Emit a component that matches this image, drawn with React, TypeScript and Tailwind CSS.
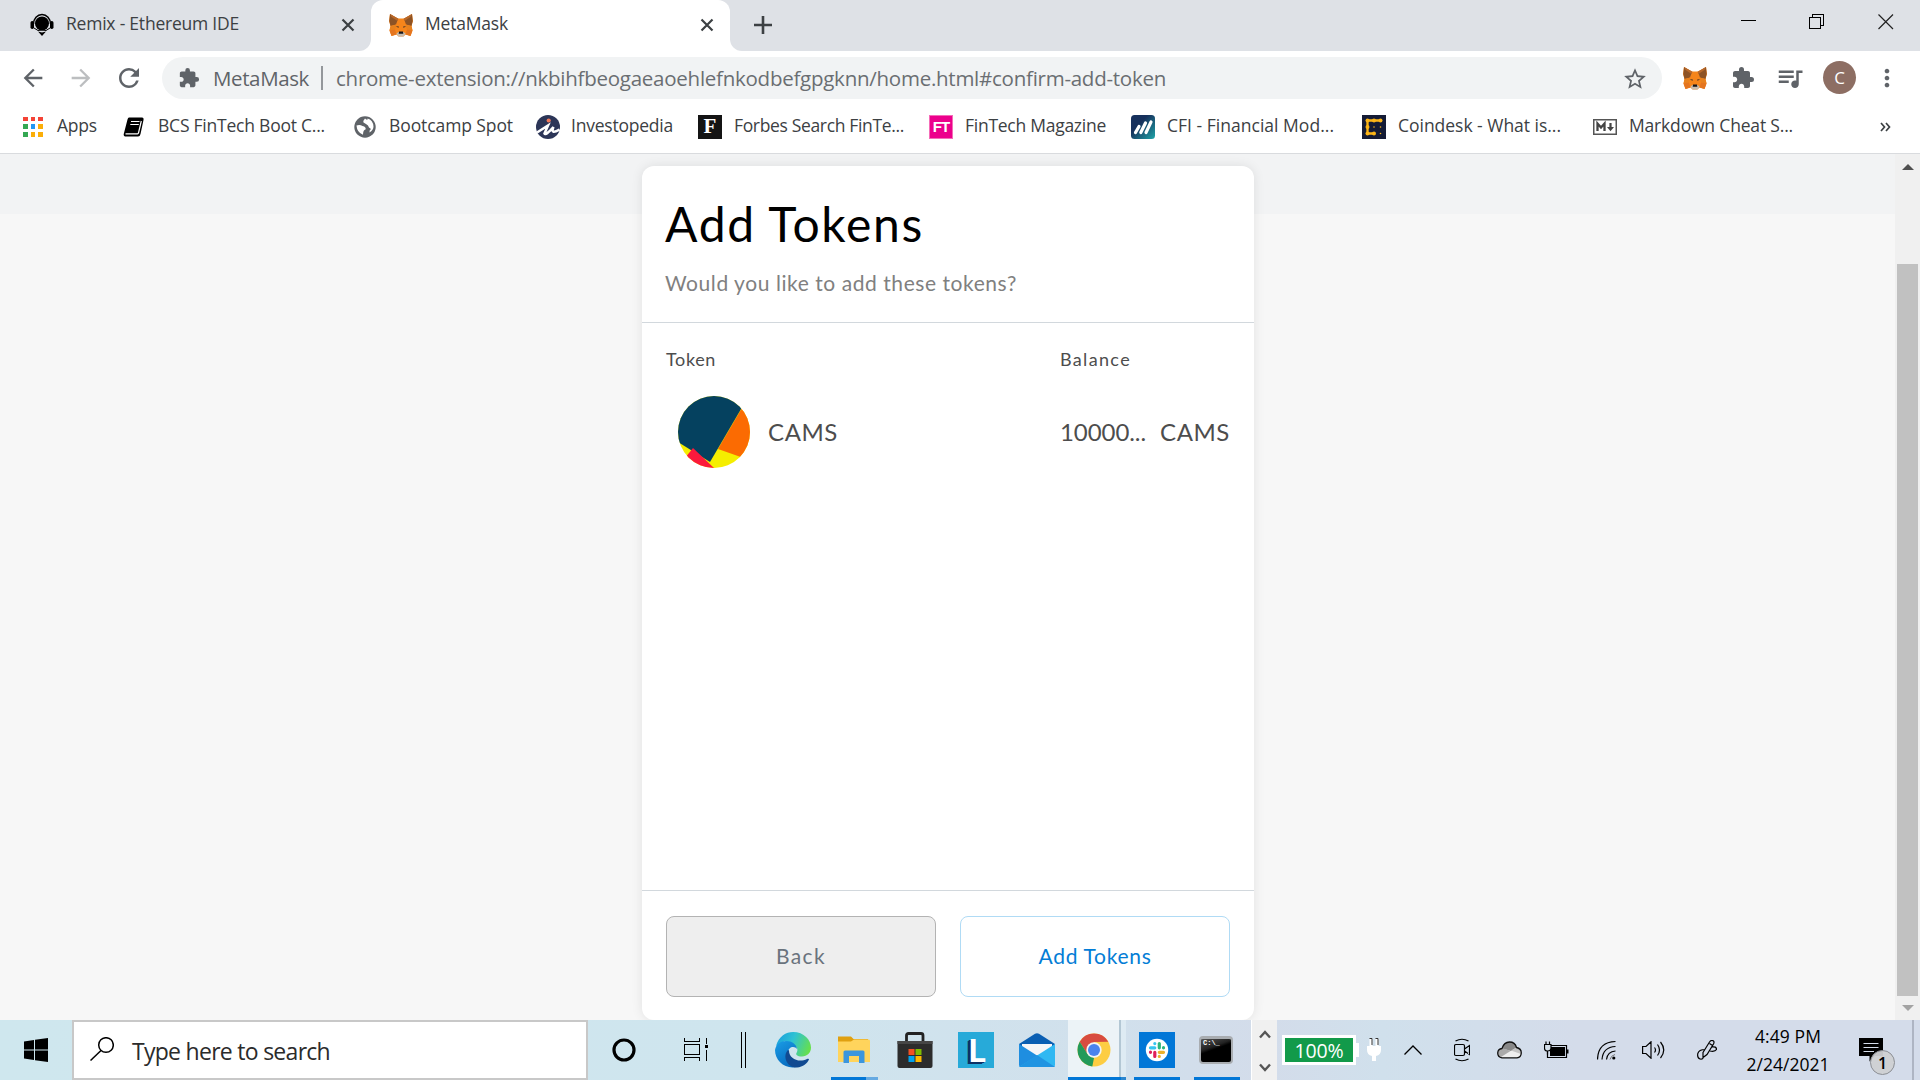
import React, { useLayoutEffect, useRef } from "react";
import { MdArrowBack, MdArrowForward, MdRefresh, MdExtension, MdStarBorder, MdQueueMusic, MdMoreVert } from "react-icons/md";

/* Text spread over a fixed width by adjusting its tracking. */
function Fit({ w, className = "", children }: { w: number; className?: string; children: string }) {
  const ref = useRef<HTMLSpanElement>(null);
  useLayoutEffect(() => {
    const el = ref.current;
    if (!el) return;
    const apply = () => {
      el.style.letterSpacing = "0px";
      const natural = el.getBoundingClientRect().width;
      el.style.letterSpacing = (w - natural) / children.length + "px";
    };
    apply();
    document.fonts?.ready.then(apply);
  }, [w, children]);
  return (
    <span className={"block shrink-0 leading-none whitespace-nowrap " + className} style={{ width: w }}>
      <span ref={ref} className="inline-block">{children}</span>
    </span>
  );
}

function Fox() {
  return (
    <svg viewBox="0 0 24 24" className="h-6 w-6 shrink-0">
      <path d="M1 1 L9 5.5 H15 L23 1 L24 8 L22.5 13 L23.500 17.5 L21.500 23 L16.5 21.5 L14.5 23.5 H9.5 L7.5 21.5 L2.500 23 L0.500 17.5 L1.5 13 L0 8 Z" fill="#f6851b" />
      <path d="M1 1 L9 6 L7 11.500 L1.500 13 L0.300 8 Z M23 1 L15 6 L17 11.500 L22.500 13 L23.700 8 Z" fill="#8d5325" />
      <path d="M1 1 L9.500 5.800 L8.500 8 L2.500 4 Z M23 1 L14.500 5.800 L15.500 8 L21.500 4 Z" fill="#b8682a" />
      <path d="M1.500 13 L7.500 11.500 L6 16.500 L0.500 17.500 Z M22.500 13 L16.500 11.500 L18 16.500 L23.500 17.500 Z" fill="#e8821e" />
      <path d="M6 16.500 L7.500 21.500 L2.500 23 L0.500 17.500 Z M18 16.500 L16.500 21.500 L21.500 23 L23.500 17.500 Z" fill="#e4751f" />
      <path d="M6.800 13.500 L9.500 13 L9.800 15 Z M17.200 13.500 L14.500 13 L14.200 15 Z" fill="#6b4526" />
      <path d="M7.500 20.500 L9.500 19 H14.500 L16.500 20.500 L14.500 23.500 H9.500 Z" fill="#c7bcb0" />
      <path d="M10 18.500 H14 L14.300 20.800 H9.700 Z" fill="#16161a" />
    </svg>
  );
}

function CloseX({ className }: { className: string }) {
  return (
    <svg viewBox="0 0 14 14" className={"h-3.5 w-3.5 shrink-0 " + className}>
      <path d="M1.500 1.500 L12.500 12.500 M12.500 1.500 L1.500 12.500" stroke="#3c4043" strokeWidth="2.200" fill="none" />
    </svg>
  );
}

function TabStrip() {
  return (
    <div className="flex h-[51px] bg-[#dee1e6]">
      <div className="flex h-[51px] w-[371px] shrink-0 items-center bg-white">
        <div className="flex h-full w-full items-center rounded-br-xl bg-[#dee1e6] pb-px pl-[30px]">
          <svg viewBox="0 0 24 24" className="mb-0.5 h-6 w-6 shrink-0">
            <path d="M3.500 12 A8.500 9.500 0 0 1 20.500 12" fill="none" stroke="#000" strokeWidth="1.500" />
            <circle cx="12" cy="11.500" r="7" fill="#000" />
            <rect x="0.500" y="9" width="3.500" height="8" rx="1.700" />
            <rect x="20" y="9" width="3.500" height="8" rx="1.700" />
            <path d="M4 16 Q8 20 12 18 Q16 20 20 16" stroke="#000" fill="none" />
            <path d="M8 19.500 L12 24 L16 19.500 L12 20.500 Z" />
          </svg>
          <Fit w={173} className="mb-0.5 ml-3 text-[17.500px] text-[#3c4043]">Remix - Ethereum IDE</Fit>
          <CloseX className="ml-[102px]" />
        </div>
      </div>
      <div className="flex h-[51px] w-[359px] shrink-0 items-center rounded-t-xl bg-white pb-px pl-[18px]">
        <Fox />
        <Fit w={83} className="mb-0.5 ml-3 text-[17.500px] text-[#3c4043]">MetaMask</Fit>
        <CloseX className="ml-[192px]" />
      </div>
      <div className="h-[51px] flex-1 bg-white">
        <div className="flex h-full rounded-bl-xl bg-[#dee1e6] pl-[23px]">
          <svg viewBox="0 0 20 20" className="mt-[15px] h-5 w-5">
            <path d="M10 1 V19 M1 10 H19" stroke="#3c4043" strokeWidth="2.600" />
          </svg>
          <div className="mt-3.5 mr-[26px] ml-auto flex gap-[53px]">
            <svg viewBox="0 0 16 16" className="-mr-px h-4 w-4" shapeRendering="crispEdges"><path d="M0 6.500 H15" stroke="#000" /></svg>
            <svg viewBox="0 0 16 16" className="h-4 w-4" shapeRendering="crispEdges">
              <path d="M0.500 3.500 H11.500 V14.500 H0.500 Z M3.500 3.500 V0.500 H14.500 V11.500 H11.500" fill="none" stroke="#000" />
            </svg>
            <svg viewBox="0 0 16 16" className="h-4 w-4"><path d="M0.500 0.500 L15 15 M15 0.500 L0.500 15" stroke="#222" strokeWidth="1.200" /></svg>
          </div>
        </div>
      </div>
    </div>
  );
}

function Toolbar() {
  return (
    <div className="flex h-[53px] items-center bg-white pl-[19px]">
      <MdArrowBack className="h-7 w-7 text-[#5f6368]" />
      <MdArrowForward className="ml-5 h-7 w-7 text-[#bcbec0]" />
      <MdRefresh className="ml-[19px] h-[30px] w-[30px] text-[#5f6368]" />
      <div className="ml-[18px] flex h-[42px] w-[1500px] items-center rounded-full bg-[#f1f3f4] pr-3.5">
        <MdExtension className="ml-4 h-[22px] w-[22px] text-[#5f6368]" />
        <Fit w={96} className="mt-0.5 ml-[13px] text-[20.500px] text-[#5f6368]">MetaMask</Fit>
        <div className="ml-3 h-6 w-0.5 bg-[#94979b]" />
        <Fit w={830} className="mt-0.5 ml-[13px] text-[20.500px] text-[#6a6e72]">chrome-extension://nkbihfbeogaeaoehlefnkodbefgpgknn/home.html#confirm-add-token</Fit>
        <MdStarBorder className="mt-0.5 ml-auto h-[26px] w-[26px] text-[#5f6368]" />
      </div>
      <div className="ml-[21px]"><Fox /></div>
      <MdExtension className="ml-6 h-6 w-6 text-[#5f6368]" />
      <MdQueueMusic className="ml-5 h-[30px] w-[30px] text-[#5f6368]" />
      <div className="ml-[18px] flex h-[33px] w-[33px] items-center justify-center rounded-full bg-[#8d6e63] text-[17px] leading-none text-white">C</div>
      <MdMoreVert className="ml-[17px] h-7 w-7 text-[#5f6368]" />
    </div>
  );
}

const bookmarks: { icon: React.ReactNode; lead: string; gap: string; w: number; label: string }[] = [
  {
    lead: "ml-[23px]", gap: "ml-3.5", w: 40, label: "Apps",
    icon: (
      <div className="grid h-5 w-5 shrink-0 grid-cols-3 gap-[3px]">
        <i className="bg-[#f44336]" /><i className="bg-[#f44336]" /><i className="bg-[#f44336]" />
        <i className="bg-[#34a853]" /><i className="bg-[#2196f3]" /><i className="bg-[#fbae08]" />
        <i className="bg-[#34a853]" /><i className="bg-[#fbae08]" /><i className="bg-[#fbae08]" />
      </div>
    ),
  },
  {
    lead: "ml-[26px]", gap: "ml-[13px]", w: 167, label: "BCS FinTech Boot C...",
    icon: (
      <svg viewBox="0 0 22 20" className="h-5 w-[22px] shrink-0">
        <path d="M6 0.500 H19 Q21 0.500 20.500 3 L17.500 17 Q17 19.500 15 19.500 H2 Q0 18.500 1 16 L4.500 2.500 Q5 0.500 6 0.500 Z" fill="#000" />
        <path d="M8 4.500 H16.500 M7.300 7.500 H15.800" stroke="#fff" strokeWidth="1.200" />
        <path d="M2.500 16.800 H14.500 Q15.300 16.800 15.600 15.500 L18.300 4" stroke="#fff" strokeWidth="1.200" fill="none" />
      </svg>
    ),
  },
  {
    lead: "ml-[29px]", gap: "ml-[13px]", w: 124, label: "Bootcamp Spot",
    icon: (
      <svg viewBox="0 0 22 22" className="h-[22px] w-[22px] shrink-0">
        <circle cx="11" cy="11" r="10.700" fill="#5f6368" />
        <path d="M2.500 9.500 Q6 8.500 8.500 10 Q12.500 11 11.500 13.500 Q9 14 9 18.800 Q3 16.500 2.500 9.500 Z M11 2.500 Q9 4.500 9.500 6.500 L12 8 Q14.500 9 15 11.500 L17 13 Q15 14 15.500 16.500 Q19.500 14 19.500 10.500 Q19 4 13.500 2.500 Q14 5 11 2.500 Z" fill="#fff" />
      </svg>
    ),
  },
  {
    lead: "ml-[23px]", gap: "ml-[11px]", w: 102, label: "Investopedia",
    icon: (
      <svg viewBox="0 0 24 24" className="h-6 w-6 shrink-0">
        <circle cx="12" cy="12" r="12" fill="#2c3557" />
        <circle cx="12.700" cy="5.500" r="2.100" fill="#f0795b" />
        <path d="M1 17.500 L12 10.500 L8.500 18.500 Q9.500 21 17.500 12 Q14 20 23.500 14.500" fill="none" stroke="#fff" strokeWidth="2.500" />
      </svg>
    ),
  },
  {
    lead: "ml-[25px]", gap: "ml-3", w: 170, label: "Forbes Search FinTe...",
    icon: <div className="flex h-6 w-6 shrink-0 items-center justify-center bg-[#141414] font-['Liberation_Serif',serif] text-[21px] leading-none font-bold text-white">F</div>,
  },
  {
    lead: "ml-[25px]", gap: "ml-3", w: 141, label: "FinTech Magazine",
    icon: <div className="flex h-6 w-6 shrink-0 items-center justify-center border border-[#f56cb8] bg-[#ec008c] font-['Liberation_Sans',sans-serif] text-[15px] leading-none font-bold tracking-[-1px] text-white">FT</div>,
  },
  {
    lead: "ml-[25px]", gap: "ml-3", w: 167, label: "CFI - Financial Mod...",
    icon: (
      <svg viewBox="0 0 24 24" className="h-6 w-6 shrink-0">
        <defs><linearGradient id="cfi" x1="0" y1="0" x2="1" y2="1"><stop offset="0.350" stopColor="#16305c" /><stop offset="1" stopColor="#1fa5a8" /></linearGradient></defs>
        <rect width="24" height="24" rx="3.500" fill="url(#cfi)" />
        <path d="M4.500 17.500 L8 11.500 M9.800 17.500 L14.500 8 M15 17.500 L20 7" stroke="#fff" strokeWidth="3.200" strokeLinecap="round" />
      </svg>
    ),
  },
  {
    lead: "ml-[28px]", gap: "ml-3", w: 163, label: "Coindesk - What is...",
    icon: (
      <svg viewBox="0 0 24 24" className="h-6 w-6 shrink-0">
        <rect width="24" height="24" fill="#141b35" />
        <path d="M18.500 5.500 H5.500 V18.500 H12" fill="none" stroke="#fcb517" strokeWidth="2.300" />
        <g fill="#fcb517"><circle cx="5.500" cy="5.500" r="2" /><circle cx="12" cy="5.500" r="2" /><circle cx="18.500" cy="5.500" r="2" /><circle cx="5.500" cy="12" r="2" /><circle cx="5.500" cy="18.500" r="2" /><circle cx="12" cy="18.500" r="2" /><circle cx="12" cy="12" r="0.800" /><circle cx="18.500" cy="12" r="0.800" /><circle cx="18.500" cy="18.500" r="0.800" /></g>
      </svg>
    ),
  },
  {
    lead: "ml-[32px]", gap: "ml-3", w: 164, label: "Markdown Cheat S...",
    icon: (
      <svg viewBox="0 0 24 16" className="h-4 w-6 shrink-0">
        <rect x="0.750" y="0.750" width="22.500" height="14.500" fill="#fff" stroke="#555" strokeWidth="1.500" />
        <path d="M4.500 12 V4.500 L8 8.500 L11.500 4.500 V12" fill="none" stroke="#444" strokeWidth="2.300" />
        <path d="M17.500 4 V9" stroke="#444" strokeWidth="2.200" /><path d="M14 8 H21 L17.500 12.300 Z" fill="#444" />
      </svg>
    ),
  },
];

function Bookmarks() {
  return (
    <div className="flex h-[50px] items-center border-b border-[#d9dbde] bg-white pb-1">
      {bookmarks.map((b) => (
        <div key={b.label} className={"flex shrink-0 items-center " + b.lead}>
          {b.icon}
          <Fit w={b.w} className={"mb-0.5 text-[17.500px] text-[#3c4043] " + b.gap}>{b.label}</Fit>
        </div>
      ))}
      <svg viewBox="0 0 11 10" className="mr-[29px] ml-auto h-2.5 w-[11px]">
        <path d="M1 1 L4.500 5 L1 9 M6 1 L9.500 5 L6 9" fill="none" stroke="#3c4043" strokeWidth="1.700" />
      </svg>
    </div>
  );
}

function Page() {
  return (
    <div className="flex h-[866px] overflow-hidden bg-[#f7f7f7] font-[Lato,sans-serif]">
      <div className="flex flex-1 justify-center bg-[linear-gradient(#f2f3f4_0,#f2f3f4_60px,#f7f7f7_60px)] pl-px">
        <div className="mt-3 flex h-[854px] w-[612px] flex-col rounded-xl bg-white shadow-[0_0_12px_rgba(0,0,0,0.09)]">
          <div className="h-[157px] border-b border-[#d2d8dd] px-[23px] pt-[34px]">
            <Fit w={259} className="text-[48px] text-black">Add Tokens</Fit>
            <Fit w={352} className="mt-[24px] text-[21px] text-[#808080]">Would you like to add these tokens?</Fit>
          </div>
          <div className="flex flex-1 flex-col px-6 pt-[27px] text-[#4d4d4d]">
            <div className="flex">
              <Fit w={50} className="text-[18px]">Token</Fit>
              <Fit w={71} className="ml-[344px] text-[18px]">Balance</Fit>
            </div>
            <div className="mt-[28px] flex items-center pl-3">
              <svg viewBox="0 0 72 72" className="h-[72px] w-[72px]">
                <defs><clipPath id="disc"><circle cx="36" cy="36" r="36" /></clipPath></defs>
                <g clipPath="url(#disc)">
                  <rect width="72" height="72" fill="#f5ee00" />
                  <path d="M64 12 L80 12 L80 67 L40 53 Z" fill="#fb6b02" />
                  <path d="M-4 -4 H73 L32 66 L0 46 Z" fill="#05415f" />
                  <path d="M15 52 L36 72 L5 74 L7 62 Z" fill="#fb1a3c" />
                </g>
              </svg>
              <Fit w={70} className="ml-[18px] text-[24px]">CAMS</Fit>
              <Fit w={86} className="ml-[222px] text-[24px]">10000...</Fit>
              <Fit w={70} className="ml-3.5 text-[24px]">CAMS</Fit>
            </div>
          </div>
          <div className="flex h-[130px] gap-6 border-t border-[#d2d8dd] px-6 pt-[25px]">
            <button className="flex h-[81px] w-[270px] items-center justify-center rounded-lg border border-[#b3b3b3] bg-[#eee]">
              <Fit w={50} className="mb-0.5 text-[21px] text-[#6a737d]">Back</Fit>
            </button>
            <button className="flex h-[81px] w-[270px] items-center justify-center rounded-lg border border-[#b0dbf5] bg-white">
              <Fit w={113} className="mb-0.5 text-[21px] text-[#037dd6]">Add Tokens</Fit>
            </button>
          </div>
        </div>
      </div>
      <div className="flex w-[25px] flex-col items-center bg-[#f0f0f0]">
        <svg viewBox="0 0 12 6" className="mt-2.5 h-1.5 w-3"><path d="M0 6 L6 0 L12 6 Z" fill="#505050" /></svg>
        <div className="mt-[94px] h-[732px] w-[21px] bg-[#c1c1c1]" />
        <svg viewBox="0 0 12 6" className="mt-[9px] h-1.5 w-3"><path d="M0 0 L6 6 L12 0 Z" fill="#a3a3a3" /></svg>
      </div>
    </div>
  );
}

function Taskbar() {
  return (
    <div className="flex h-[60px] bg-[linear-gradient(90deg,#cfe7ee_0,#cfe5ee_40%,#d1e0ec_58%,#d3dcea_66%,#d0e0ec_72%,#d4dcea_82%,#d4dcea_100%)]">
      <div className="flex w-[72px] shrink-0 items-center justify-center">
        <svg viewBox="0 0 24 24" className="h-6 w-6">
          <path d="M0 3.500 L10 2 V11.500 H0 Z M11 1.800 L24 0 V11.500 H11 Z M0 12.500 H10 V22 L0 20.500 Z M11 12.500 H24 V24 L11 22.200 Z" />
        </svg>
      </div>
      <div className="flex w-[516px] shrink-0 items-center border-2 border-[#c8c8c8] bg-white pl-4">
        <svg viewBox="0 0 24 24" className="mb-0.5 h-6 w-6"><circle cx="16" cy="8" r="7.300" fill="none" stroke="#000" strokeWidth="1.500" /><path d="M11 13.500 L0.500 23.500" stroke="#000" strokeWidth="1.500" /></svg>
        <Fit w={198} className="mt-0.5 ml-[18px] text-[23px] text-[#2b2b2b]">Type here to search</Fit>
      </div>
      <div className="flex w-[72px] shrink-0 items-center justify-center">
        <svg viewBox="0 0 24 24" className="h-6 w-6"><circle cx="12" cy="12" r="10" fill="none" stroke="#000" strokeWidth="3.200" /></svg>
      </div>
      <div className="flex w-[72px] shrink-0 items-center justify-center">
        <svg viewBox="0 0 24 24" className="h-6 w-6" shapeRendering="crispEdges">
          <path d="M0.500 0 V3.500 H15.500 V0 M0.500 6.500 H15.500 V16.500 H0.500 Z M0.500 23 V19.500 H15.500 V23 M22.500 0 V6 M22.500 12 V23" fill="none" stroke="#000" />
          <rect x="21" y="7" width="3" height="3" />
        </svg>
      </div>
      <div className="flex w-[30px] shrink-0 items-center gap-[3px] pl-[9px]">
        <i className="h-9 w-px bg-black" /><i className="h-9 w-px bg-black" />
      </div>
      <div className="flex w-[62px] shrink-0 items-center justify-center">
        <svg viewBox="0 0 36 36" className="h-9 w-9">
          <defs>
            <linearGradient id="eTop" x1="0" y1="0.300" x2="1" y2="0.600"><stop offset="0" stopColor="#1ba1dd" /><stop offset="0.450" stopColor="#2fc2d3" /><stop offset="1" stopColor="#67e04a" /></linearGradient>
            <linearGradient id="eLeft" x1="0" y1="0" x2="0.600" y2="1"><stop offset="0" stopColor="#1a9de6" /><stop offset="1" stopColor="#0669bd" /></linearGradient>
          </defs>
          <path d="M1 14 C4 4 11 0 18 0 C29 0 36 8 36 15.500 C36 21 32 24.500 27 24.500 C22 24.500 20.500 22.500 21.500 21 C24 17 21 13.500 18 13 L10 9 Z" fill="url(#eTop)" />
          <path d="M0 18 C1 12 6 9 11 9 C17 9 21.500 12.500 22 17 C20 13.500 13 14 13 21 C13 27 18 34 25 34 C12 39 0 30 0 18 Z" fill="url(#eLeft)" />
          <path d="M13 18 C7 24 12 36 22 35.500 C28 35 32.500 31 34 27.500 C34 26.500 33 26.500 32 27 C24 31 14 27 14 18.500 Z" fill="#114a91" />
        </svg>
      </div>
      <div className="relative flex w-[60px] shrink-0 items-center justify-center">
        <svg viewBox="0 0 32 28" className="h-7 w-8">
          <path d="M0 0.500 H13 L15.500 3 H30 V10 H0 Z" fill="#e0a010" />
          <path d="M0 5.500 H13 L16 3.500 H31 Q32 3.500 32 5 V26 H0 Z" fill="#ffd45c" />
          <path d="M5.500 27 V16 Q5.500 14.500 7 14.500 H25 Q26.500 14.500 26.500 16 V27 H21 V20 H11 V27 Z" fill="#3c96dd" />
        </svg>
        <div className="absolute bottom-0 left-[7px] flex h-[3px] w-[47px]"><i className="w-[35px] bg-[#0277d7]" /><i className="flex-1 bg-[#66aae2]" /></div>
      </div>
      <div className="flex w-[61px] shrink-0 items-center justify-center">
        <svg viewBox="0 0 36 36" className="h-9 w-9">
          <path d="M9.500 11 V3.500 Q9.500 1.500 11.500 1.500 H24 Q26 1.500 26 3.500 V11" fill="none" stroke="#222" strokeWidth="2.800" />
          <path d="M0.500 9 H35.500 V34 Q35.500 36 33.500 36 H2.500 Q0.500 36 0.500 34 Z" fill="#2c2c2c" /><path d="M0.500 9 H35.500 V12 H0.500 Z" fill="#464646" />
          <path d="M11.500 17 H17.500 V23 H11.500 Z" fill="#f25022" /><path d="M18.500 17 H24.500 V23 H18.500 Z" fill="#7fba00" />
          <path d="M11.500 24 H17.500 V30 H11.500 Z" fill="#00a4ef" /><path d="M18.500 24 H24.500 V30 H18.500 Z" fill="#ffb900" />
        </svg>
      </div>
      <div className="flex w-[61px] shrink-0 items-center justify-center">
        <div className="flex h-9 w-9 items-center justify-center bg-[#27aad9] pl-1 font-[Inter,sans-serif] text-[31px] leading-none font-bold text-white [text-shadow:-1px_1px_0_#0d3266,-2px_1px_0_#0d3266,-3px_2px_0_#0d3266]">L</div>
      </div>
      <div className="flex w-[62px] shrink-0 items-center justify-center">
        <svg viewBox="0 0 36 34" className="h-[34px] w-9">
          <path d="M0 11 L16 0.800 Q18 -0.300 20 0.800 L36 11 L34 15 H2 Z" fill="#0a5fb3" />
          <path d="M3 11 H33 V20 L18 24 L3 20 Z" fill="#f5f6f8" />
          <path d="M0 11 L36 34 H2 Q0 34 0 32 Z" fill="#1f8ee0" />
          <path d="M36 11 L0 34 H34 Q36 34 36 32 Z" fill="#30b8f2" />
          <path d="M18 22 L0 34 H36 Z" fill="#2094e2" />
        </svg>
      </div>
      <div className="relative flex w-[58px] shrink-0 items-center bg-[#ecf3f7] pl-[9px]">
        <svg viewBox="0 0 34 34" className="h-[34px] w-[34px]">
          <circle cx="17" cy="17" r="16.500" fill="#fdcd43" />
          <path d="M2.700 8.800 A16.500 16.500 0 0 1 31.300 8.800 L17 9 L9.800 20 Z" fill="#d84b3f" />
          <path d="M2.700 8.800 L10.500 21 L17 25 L15.300 33.400 A16.500 16.500 0 0 1 2.700 8.800 Z" fill="#229a5a" />
          <path d="M17 9.300 H31.500 L24 21 L15.500 33.400 L23 19 Z" fill="#fdcd43" />
          <circle cx="17" cy="17" r="7.700" fill="#f4f4f4" /><circle cx="17" cy="17" r="6" fill="#4a83ee" />
        </svg>
        <div className="absolute top-0 right-0 flex h-full w-[7px]"><i className="w-0.5 bg-[#b3c7d4]" /><i className="flex-1 bg-[#deebf3]" /></div>
        <div className="absolute bottom-0 left-0 flex h-[3px] w-full"><i className="w-[53px] bg-[#0277d7]" /><i className="flex-1 bg-[#2b86cf]" /></div>
      </div>
      <div className="relative flex w-[62px] shrink-0 items-center justify-center">
        <svg viewBox="0 0 36 36" className="h-9 w-9">
          <rect width="36" height="36" fill="#0277d7" /><circle cx="18" cy="18" r="11.200" fill="#fff" />
          <g strokeWidth="3.200" strokeLinecap="round" fill="none">
            <path d="M15.800 11.500 V11.600 M11.500 15.800 H15.800" stroke="#36c5f0" /><path d="M20.300 11.500 V15.800 M24.500 15.800 V15.700" stroke="#2eb67d" />
            <path d="M20.300 20.300 H24.500 M20.300 24.500 V24.400" stroke="#ecb22e" /><path d="M15.800 20.300 V24.500 M11.500 20.300 V20.200" stroke="#e01e5a" />
          </g>
        </svg>
        <div className="absolute bottom-0 left-2 h-[3px] w-[46px] bg-[#0277d7]" />
      </div>
      <div className="relative flex w-[63px] shrink-0 items-center pl-[11px]">
        <div className="mb-px h-[28px] w-[34px] rounded-sm border-2 border-t-[3px] border-[#a9adb1] bg-[linear-gradient(160deg,#555_0,#222_35%,#000_45%)] pl-0.5 font-['Liberation_Mono',monospace] text-[7px] leading-[9px] font-bold text-white">C:\_</div>
        <div className="absolute bottom-0 left-1.5 h-[3px] w-[46px] bg-[#0277d7]" />
      </div>
      <div className="flex w-[26px] shrink-0 flex-col items-center gap-[24px] border-l border-white bg-[#f0f0f0] pt-2.5">
        <svg viewBox="0 0 12 9" className="h-[9px] w-3"><path d="M1 7.500 L6 2 L11 7.500" fill="none" stroke="#555" strokeWidth="2.400" /></svg>
        <svg viewBox="0 0 12 9" className="h-[9px] w-3"><path d="M1 1.500 L6 7 L11 1.500" fill="none" stroke="#555" strokeWidth="2.400" /></svg>
      </div>
      <div className="flex shrink-0 items-center pl-[5px]">
        <div className="flex h-[30px] w-[74px] items-center justify-center border-[3px] border-white bg-[#129a4a]">
          <Fit w={49} className="mt-0.5 text-[19.500px] text-white">100%</Fit>
        </div>
        <i className="h-3.5 w-[3px] bg-white" />
        <svg viewBox="0 0 14 24" className="ml-2 h-6 w-3.5">
          <path d="M4 1 V8 M10 1 V8" stroke="#fff" strokeWidth="3" /><path d="M2.500 0.500 H5 V7 M8.500 0.500 H11 V7" stroke="#333" fill="none" />
          <path d="M0 8 H14 V12 Q14 17 9 18 V23 H5 V18 Q0 17 0 12 Z" fill="#fff" />
        </svg>
      </div>
      <div className="flex shrink-0 items-center pl-[23px]">
        <svg viewBox="0 0 18 10" className="h-2.5 w-[18px]"><path d="M0.500 9.500 L9 1 L17.500 9.500" fill="none" stroke="#000" strokeWidth="1.300" /></svg>
        <svg viewBox="0 0 16 24" className="ml-8 h-6 w-4"><path d="M1.500 3 Q8 -0.500 14.500 3 M1.500 21 Q8 24.500 14.500 21 M2 6.500 H9 Q10.500 6.500 10.500 8 V16 Q10.500 17.500 9 17.500 H2 Q0.500 17.500 0.500 16 V8 Q0.500 6.500 2 6.500 M10.500 11 L15.500 7.500 V16.500 L10.500 13" fill="none" stroke="#000" strokeWidth="1.200" /></svg>
        <svg viewBox="0 0 25 18" className="ml-[27px] h-[18px] w-[25px]">
          <path d="M5 16.800 Q0.700 16 0.700 12 Q1 8 5 7.500 Q7 1 12.500 1 Q18 1 19.500 6.500 Q24.300 7.500 24.300 12 Q24 16.500 20 16.800 Z" fill="#eee" />
          <path d="M5 7.500 Q7 1 12.500 1 Q18 1 19.500 6.500 L14 10 Z" fill="#888" /><path d="M5 7.500 Q9 7.500 13.500 10 L4 16 Q0 14 1 11 Z" fill="#aaa" /><path d="M14 9.500 L19.500 6.500 Q24 7.500 24 13 Z" fill="#c4c4c4" />
          <path d="M5 16.800 Q0.700 16 0.700 12 Q1 8 5 7.500 Q7 1 12.500 1 Q18 1 19.500 6.500 Q24.300 7.500 24.300 12 Q24 16.500 20 16.800 Z" fill="none" stroke="#111" strokeWidth="1.300" />
        </svg>
        <svg viewBox="0 0 25 18" className="ml-[22px] h-[18px] w-[25px]">
          <path d="M6 4.500 H22.500 V16.500 H3.500 V11" fill="none" stroke="#000" strokeWidth="1.200" /><rect x="6" y="6" width="15" height="9" /><path d="M23.500 8.500 V12.500" stroke="#000" strokeWidth="2" />
          <path d="M0 3.500 H7 V7 Q7 10 3.500 10 Q0.500 10 0.500 7 V3.500 M2 0.500 V3 M5.500 0.500 V3 M3.500 10 V13.500" fill="#d4dfea" stroke="#000" strokeWidth="1.200" />
        </svg>
        <svg viewBox="0 0 19 20" className="ml-7 h-5 w-[19px]"><path d="M0.500 19.500 Q1 2 18.500 1.500 M5 19.500 Q6 7 18.500 6.500 M9.500 19.500 Q10.500 11.500 18.500 11" fill="none" stroke="#000" strokeWidth="1.200" /><path d="M13 19.500 Q14 15.500 18 14.500" fill="none" stroke="#777" /><circle cx="16.800" cy="18" r="1.600" /></svg>
        <svg viewBox="0 0 24 18" className="ml-[26px] h-[18px] w-6"><path d="M0.600 5.500 H4 L9 0.800 V17.200 L4 12.500 H0.600 Z M12.500 6.500 Q14.500 9 12.500 11.500 M15.500 3.500 Q19.500 9 15.500 14.500 M18.500 1 Q25 9 18.500 17" fill="none" stroke="#000" strokeWidth="1.200" /></svg>
        <svg viewBox="0 0 20 20" className="ml-[31px] h-5 w-5"><path d="M6 12.500 L12.500 2 Q14.500 -0.500 16.500 1 Q17.500 2 16.500 4 L10 14.500 L6 17.500 Z M12.500 3.500 L15.500 5.500 M8 9.500 Q2 9.500 0.800 13.500 Q0 18 3 19 Q6.500 19.500 6 17 M14.500 7 Q19.500 6 19.500 9.500 Q18 12 13 11" fill="none" stroke="#000" strokeWidth="1.200" /></svg>
      </div>
      <div className="ml-[30px] flex w-[82px] shrink-0 flex-col items-center pt-[8px]">
        <Fit w={66} className="text-[17.500px] text-black">4:49 PM</Fit>
        <Fit w={83} className="mt-[10px] text-[17.500px] text-black">2/24/2021</Fit>
      </div>
      <div className="relative ml-[30px] w-[38px] shrink-0">
        <svg viewBox="0 0 24 24" className="mt-[18px] h-6 w-6"><path d="M0 0 H24 V18 H16 L10.500 23.500 V18 H0 Z" /><path d="M4.500 5.500 H19.500 M4.500 9.500 H19.500 M4.500 13.500 H15" stroke="#d4dcea" strokeWidth="1.100" /></svg>
        <div className="absolute top-[30px] left-[11px] flex h-[25px] w-[25px] items-center justify-center rounded-full border border-[#8b8e94] bg-[#cfd0d3]/95 text-[16px] leading-none font-semibold">1</div>
      </div>
      <div className="mr-[6px] ml-auto w-0.5 bg-[#aeb5c3]" />
    </div>
  );
}

export default function App() {
  return (
    <div className="flex h-[1080px] w-[1920px] flex-col overflow-hidden bg-white font-['Open_Sans',sans-serif]">
      <TabStrip />
      <Toolbar />
      <Bookmarks />
      <Page />
      <Taskbar />
    </div>
  );
}
